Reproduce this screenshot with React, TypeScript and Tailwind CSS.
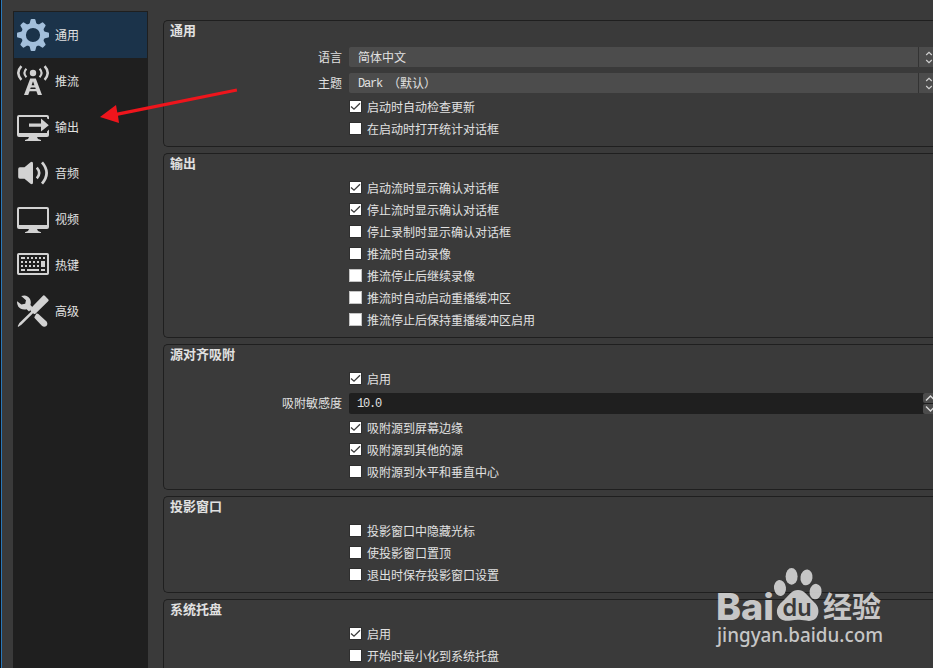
import React from "react";

const CJK = "font-['Liberation_Sans','Noto_Sans_CJK_SC',sans-serif]";
const MONO = "font-['Liberation_Mono','Noto_Sans_CJK_SC',monospace]";

function GearIcon() {
  const teeth = [0, 45, 90, 135, 180, 225, 270, 315];
  return (
    <svg viewBox="0 0 32 32" className="size-8 shrink-0" fill="#a3bfdb">
      {teeth.map((a) => (
        <path key={a} d="M11.6 6 Q13 4.6 13.6 0.8 Q13.8 0 14.6 0 H17.4 Q18.2 0 18.4 0.8 Q19 4.6 20.4 6 Z" transform={`rotate(${a} 16 16)`} />
      ))}
      <circle cx="16" cy="16" r="9.4" fill="none" stroke="#a3bfdb" strokeWidth="4.6" />
    </svg>
  );
}

function AntennaIcon() {
  return (
    <svg viewBox="0 0 32 32" className="size-8 shrink-0" fill="none" stroke="#d2d2d2">
      <circle cx="16" cy="8" r="3.2" fill="#d2d2d2" stroke="none" />
      <path d="M9.4 3.8 Q5.4 8 9.4 12.2 M22.6 3.8 Q26.6 8 22.6 12.2" strokeWidth="2.1" />
      <path d="M4.4 1.2 Q-1.8 8 4.4 14.8 M27.6 1.2 Q33.8 8 27.6 14.8" strokeWidth="2.5" />
      <path d="M13.2 13.4 H18.8 L25 30 H20.8 L19.4 26.2 H12.6 L11.2 30 H7 Z M16 16.2 L14.6 20.2 H17.4 Z M13.8 22.4 L13.2 24 H18.8 L18.2 22.4 Z" fill="#d2d2d2" fillRule="evenodd" stroke="none" />
    </svg>
  );
}

function OutputIcon() {
  return (
    <svg viewBox="0 0 32 32" className="size-8 shrink-0" fill="#d2d2d2">
      <path d="M2 4 H30 Q32 4 32 6 V8.2 L30 7.6 V6 H2 V22 H30 V20.4 L32 18.4 V24 Q32 26 30 26 H2 Q0 26 0 24 V6 Q0 4 2 4 Z" />
      <path d="M12 12.6 H24 V7.6 L31.8 14.2 L24 20.6 V15.8 H12 Z" />
      <path d="M12 26 H20 L21 28 L24 29 V30 H8 V29 L11 28 Z" />
    </svg>
  );
}

function AudioIcon() {
  return (
    <svg viewBox="0 0 32 32" className="size-8 shrink-0" fill="none" stroke="#d2d2d2">
      <path d="M1.2 12 Q1.2 10.3 2.8 10.3 H7.5 L13.5 5.2 Q16 4 16 6.5 V25.5 Q16 28 13.5 26.8 L7.5 21.7 H2.8 Q1.2 21.7 1.2 20 Z" fill="#d2d2d2" stroke="none" />
      <path d="M19.8 10.6 Q24.6 16 19.8 21.4" strokeWidth="2.6" />
      <path d="M25 5.4 Q34.2 16 25 26.6" strokeWidth="2.7" />
    </svg>
  );
}

function VideoIcon() {
  return (
    <svg viewBox="0 0 32 32" className="size-8 shrink-0" fill="#d2d2d2">
      <path fillRule="evenodd" d="M2 4 H30 Q32 4 32 6 V24 Q32 26 30 26 H2 Q0 26 0 24 V6 Q0 4 2 4 Z M2 6 V22 H30 V6 Z" />
      <path d="M12 26 H20 L21 28 L24 29.2 V30 H8 V29.2 L11 28 Z" />
    </svg>
  );
}

function KeyboardIcon() {
  return (
    <svg viewBox="0 -1 32 32" className="size-8 shrink-0" fill="#d2d2d2">
      <rect x="1" y="4" width="30" height="20" rx="0.8" fill="none" stroke="#d2d2d2" strokeWidth="2" />
      <path d="M4 7h4v2h-4z M10 7h2v2h-2z M14 7h2v2h-2z M18 7h2v2h-2z M22 7h2v2h-2z M26 7h2v2h-2z" />
      <path d="M4 11h2v2h-2z M8 11h2v2h-2z M12 11h2v2h-2z M16 11h2v2h-2z M20 11h2v2h-2z M24 11h4v6h-4z" />
      <path d="M4 15h2v2h-2z M8 15h2v2h-2z M12 15h2v2h-2z M16 15h2v2h-2z M20 15h2v2h-2z" />
      <path d="M4 19h4v2h-4z M10 19h12v2h-12z M24 19h4v2h-4z" />
    </svg>
  );
}

function ToolsIcon() {
  return (
    <svg viewBox="0 0 32 32" className="size-8 shrink-0" fill="#d2d2d2">
      <path d="M4.2 1 Q10 -1 13 4 Q14.4 7 13.4 10 L15.8 12.6 L12 16.6 L9.6 14.2 Q4 15.2 1.2 11.4 Q-0.3 9 0.1 6.2 L4.4 9.6 L8.2 8.8 L9 5.2 Z" />
      <path d="M19.4 18.6 Q20.4 18 21.4 19 L29.6 26.4 Q31.2 29 29.4 31 Q27.2 32.8 24.6 30.6 L17.6 23 Q17 22 18 21 Z" />
      <path d="M26.2 0.6 Q27 0 27.8 0.8 L31.4 4.6 Q32 5.4 31.4 6 L18.4 18.8 Q17.6 19.4 16.8 18.8 L16 18.2 L4.4 29.8 L1 32 L0.8 31 L2.4 28 L14.2 16.4 L13.4 15.4 Q12.8 14.4 13.6 13.6 Z" />
    </svg>
  );
}

const NAV = [
  { label: "通用", Icon: GearIcon, active: true },
  { label: "推流", Icon: AntennaIcon },
  { label: "输出", Icon: OutputIcon },
  { label: "音频", Icon: AudioIcon },
  { label: "视频", Icon: VideoIcon },
  { label: "热键", Icon: KeyboardIcon },
  { label: "高级", Icon: ToolsIcon },
];

function Group({ title, children }: { title: string; children: React.ReactNode }) {
  return (
    <section className="flex shrink-0 flex-col rounded-l-[5px] border border-r-0 border-[#1f1f1f] pb-1.5">
      <h2 className="mb-1 h-[19px] pl-1.5 text-[13px] leading-[19px] font-bold text-[#e1e1e1]">{title}</h2>
      {children}
    </section>
  );
}

function Check({ label, checked, framed }: { label: string; checked?: boolean; framed?: boolean }) {
  return (
    <label className="flex h-[22px] items-start pl-[185px]">
      <span className={`mt-1 size-[13px] shrink-0 border bg-white ${framed ? "border-[#c4c4c4]" : "border-[#2f2f2f]"}`}>
        {checked && (
          <svg viewBox="0 0 11 11" className="size-[11px]" fill="none" stroke="#3c3c3c" strokeWidth="1.3">
            <path d="M1 5.4 L4 8.2 L10 2.2" />
          </svg>
        )}
      </span>
      <span className="ml-[5px] pt-px leading-[22px] whitespace-nowrap">{label}</span>
    </label>
  );
}

function Field({ label, children }: { label: string; children: React.ReactNode }) {
  return (
    <div className="flex items-start">
      <span className="mr-[7px] h-5 w-[178px] shrink-0 text-right leading-[22px]">{label}</span>
      {children}
    </div>
  );
}

function Combo({ latin, value }: { latin?: string; value: string }) {
  return (
    <div className="flex h-5 flex-1 rounded-l-[2px] bg-[#4c4c4c]">
      <span className="flex flex-1 pl-[9px] leading-[22px] whitespace-pre">
        {latin && <span className={`w-[30px] text-[12px] tracking-[-1.2px] ${MONO}`}>{latin}</span>}
        <span>{value}</span>
      </span>
      <span className="flex w-[15px] justify-end border-l border-[#333333]">
        <svg viewBox="0 0 8 20" className="h-5 w-2" fill="none" stroke="#d0d0d0" strokeWidth="1.2">
          <path d="M1.2 8 L4 5.4 L6.8 8 M1.2 13 L4 15.6 L6.8 13" />
        </svg>
      </span>
    </div>
  );
}

function Spin({ value }: { value: string }) {
  return (
    <div className="flex h-[21px] flex-1 rounded-l-[2px] bg-[#1f1f1f]">
      <span className={`flex-1 pl-[8px] text-[12px] leading-[23px] tracking-[-1.2px] ${MONO}`}>{value}</span>
      <span className="flex w-[10px] flex-col gap-px">
        <svg viewBox="0 0 10 10" className="h-2.5 w-2.5 rounded-l-[2px] bg-[#4c4c4c]" fill="none" stroke="#d8d8d8" strokeWidth="1.4">
          <path d="M3 7.6 L7.5 3 L12 7.6" />
        </svg>
        <svg viewBox="0 0 10 10" className="h-2.5 w-2.5 rounded-l-[2px] bg-[#4c4c4c]" fill="none" stroke="#d8d8d8" strokeWidth="1.4">
          <path d="M3 2.4 L7.5 7 L12 2.4" />
        </svg>
      </span>
    </div>
  );
}

function Watermark() {
  return (
    <svg viewBox="0 0 180 90" className="absolute top-[564px] left-[711px] h-[90px] w-[180px] opacity-90" fill="#d6d6d6">
      <text x="5" y="56" fontFamily="Inter, sans-serif" fontWeight="800" fontSize="37" textLength="58" lengthAdjust="spacingAndGlyphs">Bai</text>
      <ellipse cx="69" cy="24" rx="6" ry="8" transform="rotate(-8 69 24)" />
      <ellipse cx="80.6" cy="12.4" rx="6" ry="8.4" />
      <ellipse cx="95.5" cy="13.4" rx="6" ry="8" transform="rotate(8 95.5 13.4)" />
      <ellipse cx="104.6" cy="27.6" rx="6" ry="7.8" transform="rotate(8 104.6 27.6)" />
      <path d="M87 26 C93 26 96 31 100 35 C104 39 108 42 107.4 48 C107 55 101 58 95 56.6 C89 55.4 85 55.4 80 56.4 C73 58 67 55 66 49 C65.2 42 70 39 74 35 C78 31 81 26 87 26 Z" />
      <text x="71.5" y="52" fill="#3a3a3a" fontFamily="Inter, sans-serif" fontWeight="600" fontSize="24" textLength="29" lengthAdjust="spacingAndGlyphs">du</text>
      <text x="112" y="54" fontFamily="'Noto Sans CJK SC', sans-serif" fontWeight="700" fontSize="29" textLength="58" lengthAdjust="spacingAndGlyphs">经验</text>
      <text x="6" y="78" fontFamily="'Noto Sans', sans-serif" fontWeight="500" fontSize="19" textLength="166" lengthAdjust="spacingAndGlyphs">jingyan.baidu.com</text>
    </svg>
  );
}

export default function App() {
  return (
    <div className={`relative flex h-[668px] w-[933px] overflow-hidden bg-[#3a3a3a] text-[12px] text-[#e1e1e1] ${CJK}`}>
      <div className="w-0.5 shrink-0 border-r border-l border-r-[#2a78b8] border-l-[#0c0f14]" />
      <nav className="mt-[11px] ml-[11px] w-[135px] shrink-0 border border-b-0 border-[#1f1f1f] bg-[#1f1f1f]">
        {NAV.map(({ label, Icon, active }) => (
          <div key={label} className={`flex h-[46px] items-center gap-[6px] pl-[3px] ${active ? "bg-[#1b334a]" : ""}`}>
            <Icon />
            <span className="pt-0.5 leading-none">{label}</span>
          </div>
        ))}
      </nav>
      <main className="mt-5 ml-[15px] flex min-w-0 flex-1 flex-col gap-1.5">
        <Group title="通用">
          <div className="mt-[3px] mb-[3px] flex flex-col gap-1.5">
            <Field label="语言"><Combo value="简体中文" /></Field>
            <Field label="主题"><Combo latin="Dark" value="（默认）" /></Field>
          </div>
          <Check label="启动时自动检查更新" checked />
          <Check label="在启动时打开统计对话框" />
        </Group>
        <Group title="输出">
          <Check label="启动流时显示确认对话框" checked />
          <Check label="停止流时显示确认对话框" checked />
          <Check label="停止录制时显示确认对话框" />
          <Check label="推流时自动录像" />
          <Check label="推流停止后继续录像" framed />
          <Check label="推流时自动启动重播缓冲区" framed />
          <Check label="推流停止后保持重播缓冲区启用" framed />
        </Group>
        <Group title="源对齐吸附">
          <Check label="启用" checked />
          <div className="my-[3px]">
            <Field label="吸附敏感度"><Spin value="10.0" /></Field>
          </div>
          <Check label="吸附源到屏幕边缘" checked />
          <Check label="吸附源到其他的源" checked />
          <Check label="吸附源到水平和垂直中心" />
        </Group>
        <Group title="投影窗口">
          <Check label="投影窗口中隐藏光标" />
          <Check label="使投影窗口置顶" />
          <Check label="退出时保存投影窗口设置" />
        </Group>
        <Group title="系统托盘">
          <Check label="启用" checked />
          <Check label="开始时最小化到系统托盘" />
        </Group>
      </main>
      <svg viewBox="0 0 150 50" className="absolute top-20 left-[95px] h-[50px] w-[150px]" fill="#ee151c">
        <path d="M5 37 L21 25 L22.3 32.6 L141.6 8.4 L142.2 11.4 L23 35.8 L24 43 Z" />
      </svg>
      <Watermark />
    </div>
  );
}
